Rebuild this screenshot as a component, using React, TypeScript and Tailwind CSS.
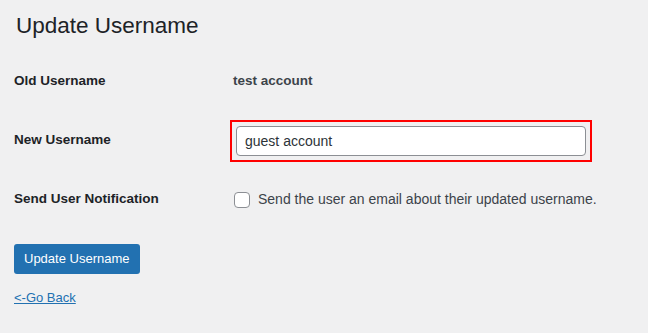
import React from "react";

export default function App() {
  const font = { fontFamily: '"Liberation Sans", Arial, sans-serif' };
  return (
    <div className="w-[648px] h-[333px] bg-[#f0f0f1] text-[#1d2327] overflow-hidden" style={font}>
      <div className="pl-[16px] pr-[14px]">
        <h1 className="text-[22.5px] leading-[30px] font-normal pt-[11px] text-[#1d2327]">Update Username</h1>
      </div>
      <div className="pl-[14px] mt-[11px]">
        <div className="flex items-center h-[59px]">
          <div className="w-[219px] text-[13.5px] font-semibold">Old Username</div>
          <div className="text-[13.5px] font-semibold text-[#3c434a]">test account</div>
        </div>
        <div className="flex items-center h-[59px]">
          <div className="w-[216px] text-[13.5px] font-semibold">New Username</div>
          <div className="border-2 border-[#ff0000] p-[4px]">
            <input
              readOnly
              value="guest account"
              className="block w-[350px] h-[30px] bg-white border border-[#8c8f94] rounded-[4px] px-[8px] text-[14px] text-[#2c3338] outline-none"
              style={font}
            />
          </div>
        </div>
        <div className="flex items-center h-[59px]">
          <div className="w-[220px] text-[13.5px] font-semibold">Send User Notification</div>
          <div className="flex items-center gap-[8px]">
            <span className="block w-[16px] h-[16px] bg-white border border-[#8c8f94] rounded-[4px]" />
            <span className="text-[14px] text-[#3c434a]">Send the user an email about their updated username.</span>
          </div>
        </div>
        <div className="mt-[15px]">
          <button className="h-[30px] px-[10px] bg-[#2271b1] text-white text-[13px] rounded-[3px] leading-[30px]" style={font}>
            Update Username
          </button>
        </div>
        <div className="mt-[11px]">
          <a className="text-[13px] text-[#2271b1] underline">&lt;-Go Back</a>
        </div>
      </div>
    </div>
  );
}
